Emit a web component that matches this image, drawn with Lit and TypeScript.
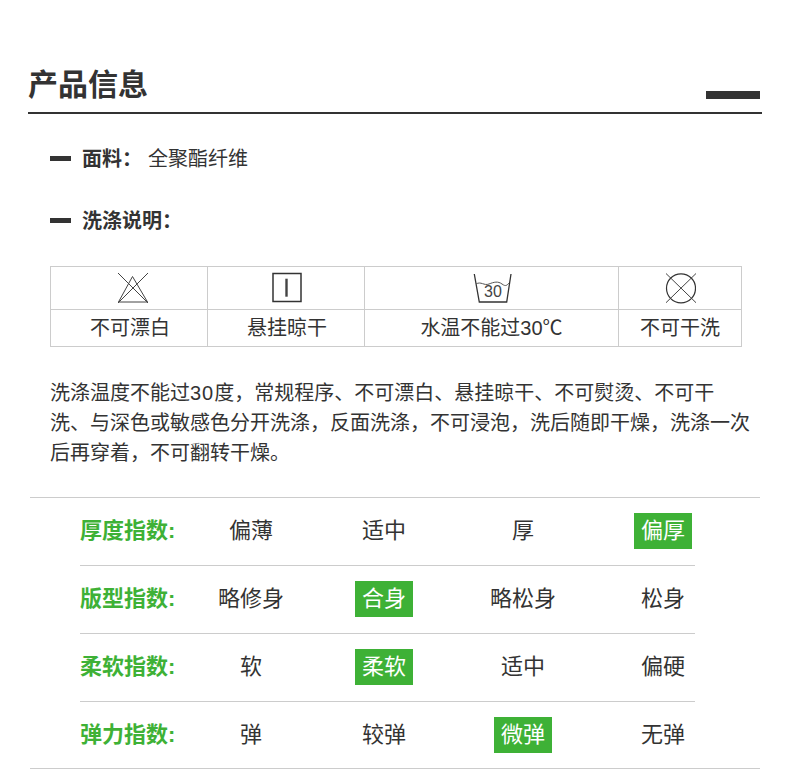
import { LitElement, html, css, svg } from "lit";
import { customElement } from "lit/decorators.js";

const rows: [string, string[], number][] = [
  ["厚度指数:", ["偏薄", "适中", "厚", "偏厚"], 3],
  ["版型指数:", ["略修身", "合身", "略松身", "松身"], 1],
  ["柔软指数:", ["软", "柔软", "适中", "偏硬"], 1],
  ["弹力指数:", ["弹", "较弹", "微弹", "无弹"], 2],
];

const COLON = "\uFF1A";
const COMMA = "\uFF0C";
const para = [
  "度",
  "常规程序、不可漂白、悬挂晾干、不可熨烫、不可干洗、与深色或敏感色分开洗涤",
  "反面洗涤",
  "不可浸泡",
  "洗后随即干燥",
  "洗涤一次后再穿着",
  "不可翻转干燥。",
].join(COMMA);

const icons = [
  svg`<svg class="ic i1" width="32" height="32" viewBox="0 0 32 32"><path d="M15.5 4.5 1.5 30H30.5ZM1 1 31 31M31 1 1 31" fill="none" stroke="#444" stroke-width="1"/></svg>`,
  svg`<svg class="ic" width="32" height="32" viewBox="0 0 32 32"><rect x="3" y="1.5" width="28" height="28" fill="none" stroke="#333" stroke-width="1.5"/><path d="M16.5 6.7V24.7" stroke="#444" stroke-width="2.4"/></svg>`,
  svg`<svg class="ic" width="40" height="32" viewBox="0 0 40 32"><path d="M2.3 2 7.3 30H34.7L39 2" fill="none" stroke="#333" stroke-width="1.3"/><path d="M4 12C9 9 12 14 17 12S26 9 30 12 35 13 37 11" fill="none" stroke="#555" stroke-width="1"/><text x="21" y="25.3" text-anchor="middle" font-size="16" fill="#444">30</text></svg>`,
  svg`<svg class="ic" width="32" height="32" viewBox="0 0 32 32"><circle cx="17" cy="16.3" r="14.5" fill="none" stroke="#333" stroke-width="1.2"/><path d="M2 1.5 32 30.7M32 1.5 2 30.7" stroke="#444" stroke-width="1"/></svg>`,
];

@customElement("app-root")
export class AppRoot extends LitElement {
  static styles = css`
    :host { display: block; width: 790px; height: 769px; overflow: hidden; background: #fff; font-family: "Liberation Sans", "Noto Sans CJK SC", sans-serif; color: #333; }
    .head { margin: 0 28px; height: 114px; border-bottom: 2px solid #333; box-sizing: border-box; display: flex; justify-content: space-between; align-items: flex-end; }
    h1 { margin: 0 0 5px; font-size: 30px; line-height: 44px; font-weight: 700; }
    .bar { width: 54px; height: 8px; background: #333; margin: 0 2px 13px 0; }
    .line { display: flex; align-items: center; margin-left: 50px; font-size: 20px; line-height: 30px; height: 30px; }
    .line i { width: 21px; height: 5px; background: #333; margin: 0 11px 2px 0; }
    .line b { font-weight: 700; }
    .line span { margin-left: 6px; font-weight: 400; }
    .l1 { margin-top: 30px; }
    .l2 { margin-top: 32px; }
    table { border-collapse: collapse; margin: 30px 0 0 50px; width: 691px; table-layout: fixed; }
    col.a { width: 157px; }
    col.b { width: 254px; }
    col.c { width: 123px; }
    td { border: 1px solid #ccc; text-align: center; padding: 0; font-size: 20px; height: 36px; line-height: 36px; }
    td.top { height: 42px; line-height: 0; }
    td.s { padding-left: 2px; }
    .ic { vertical-align: middle; }
    .i1 { margin-left: 7px; }
    p { margin: 31px 40px 0 50px; font-size: 20px; line-height: 30px; }
    .d { letter-spacing: 1px; }
    .idx { margin: 29px 30px 0; border-top: 1px solid #ccc; }
    .row { margin: 0 65px 0 50px; height: 68px; padding-top: 15px; display: grid; grid-template-columns: 105px 132px 134px 144px 100px; align-items: start; border-bottom: 1px solid #ccc; box-sizing: border-box; font-size: 22px; line-height: 36px; }
    .row:last-child { height: 67px; margin: 0; padding-left: 50px; }
    .row b { color: #3eb136; font-weight: 700; }
    .c { text-align: center; }
    .c:last-child { padding-left: 36px; }
    .on { display: block; width: 58px; margin: 0 auto; background: #3eb136; color: #fff; }
  `;
  render() {
    return html`
      <div class="head"><h1>产品信息</h1><div class="bar"></div></div>
      <div class="line l1"><i></i><b>面料${COLON}</b><span>全聚酯纤维</span></div>
      <div class="line l2"><i></i><b>洗涤说明${COLON}</b></div>
      <table>
        <colgroup><col class="a"/><col class="a"/><col class="b"/><col class="c"/></colgroup>
        <tr>${icons.map((i) => html`<td class="top">${i}</td>`)}</tr>
        <tr><td class="s">不可漂白</td><td class="s">悬挂晾干</td><td>水温不能过30℃</td><td>不可干洗</td></tr>
      </table>
      <p>洗涤温度不能过<span class="d">30</span>${para}</p>
      <div class="idx">
        ${rows.map(([t, opts, on]) => html`<div class="row"><b>${t}</b>${opts.map((o, i) => html`<div class="c">${i === on ? html`<span class="on">${o}</span>` : o}</div>`)}</div>`)}
      </div>
    `;
  }
}
